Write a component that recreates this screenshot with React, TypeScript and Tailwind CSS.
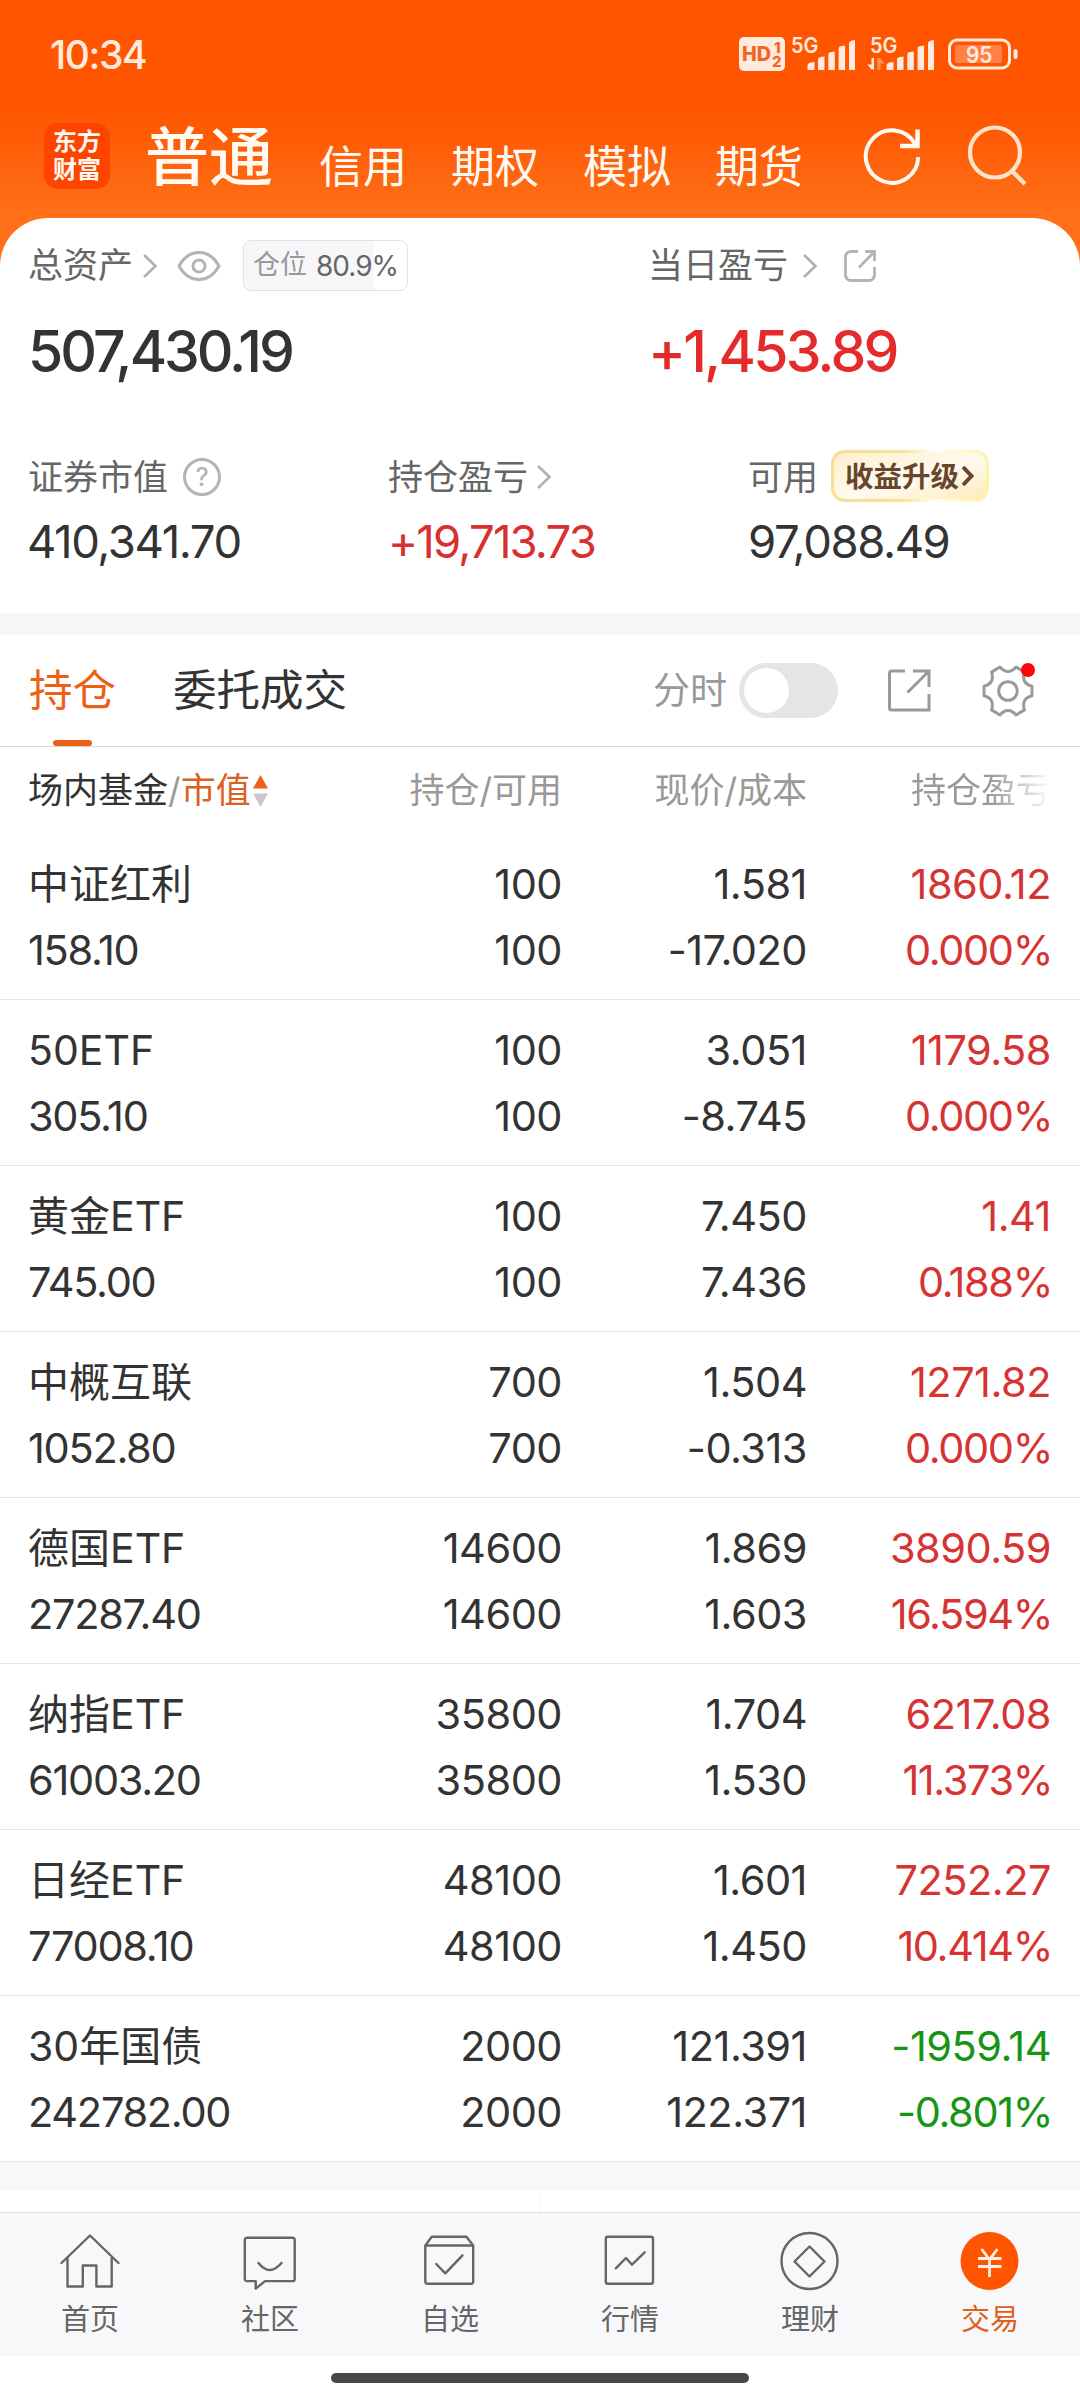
import { FC, ReactNode } from "react";
import clsx from "clsx";

interface Holding {
  name: string;
  value: string;
  amount: string;
  available: string;
  price: string;
  cost: string;
  profit: string;
  rate: string;
}

const holdings: Holding[] = [
  { name: "中证红利", value: "158.10", amount: "100", available: "100", price: "1.581", cost: "-17.020", profit: "1860.12", rate: "0.000%" },
  { name: "50ETF", value: "305.10", amount: "100", available: "100", price: "3.051", cost: "-8.745", profit: "1179.58", rate: "0.000%" },
  { name: "黄金ETF", value: "745.00", amount: "100", available: "100", price: "7.450", cost: "7.436", profit: "1.41", rate: "0.188%" },
  { name: "中概互联", value: "1052.80", amount: "700", available: "700", price: "1.504", cost: "-0.313", profit: "1271.82", rate: "0.000%" },
  { name: "德国ETF", value: "27287.40", amount: "14600", available: "14600", price: "1.869", cost: "1.603", profit: "3890.59", rate: "16.594%" },
  { name: "纳指ETF", value: "61003.20", amount: "35800", available: "35800", price: "1.704", cost: "1.530", profit: "6217.08", rate: "11.373%" },
  { name: "日经ETF", value: "77008.10", amount: "48100", available: "48100", price: "1.601", cost: "1.450", profit: "7252.27", rate: "10.414%" },
  { name: "30年国债", value: "242782.00", amount: "2000", available: "2000", price: "121.391", cost: "122.371", profit: "-1959.14", rate: "-0.801%" },
];

const Chevron: FC<{ className?: string }> = ({ className }) => (
  <svg viewBox="0 0 16 26" className={clsx("w-4 h-[26px] shrink-0", className)} fill="none" stroke="#b0b0b0" strokeWidth="2.6">
    <path d="M2 2l11.5 11L2 24" />
  </svg>
);

const Signal: FC<{ arrows?: boolean }> = ({ arrows }) => (
  <svg viewBox="-4 -6 70 48" className="w-[70px] h-12 shrink-0" fill="#ffeadd">
    <text x="0" y="16.5" fontSize="21.5" fontWeight="600" textLength="27.5" lengthAdjust="spacingAndGlyphs">
      5G
    </text>
    {arrows && (
      <>
        <path d="M4 22v11.500h-2.500L-2.500 28.500h4V22z" />
        <path d="M7.500 34V22H10l4.500 5.500H10.500V34z" opacity=".4" />
      </>
    )}
    <path d="M16.500 34v-4q0-3 3-3.500l4-.5v8zM27 34V24q0-3 3-3l3.500-.5V34zM37.300 34V19q0-3 3-3l3.500-.5V34zM47.600 34V13q0-3 3-3l3.500-.5V34zM58 34V8q0-3 3-3.500l3-.5v30z" />
  </svg>
);

const StatusBar = () => (
  <div className="flex items-center justify-between h-[108px] pl-[50px] pr-[62px] text-[#ffeadd]">
    <span className="text-[39px] leading-none font-medium tracking-[-1.4px]">10:34</span>
    <div className="flex items-center">
      <svg viewBox="0 0 46 34" className="w-[46px] h-[34px] mr-0.5">
        <rect width="46" height="34" rx="5" fill="#ffeadd" />
        <g fill="#f0661f" fontWeight="800">
          <text x="3" y="24" fontSize="20" textLength="29" lengthAdjust="spacingAndGlyphs">HD</text>
          <text x="35" y="15.5" fontSize="15">1</text>
          <text x="33" y="30" fontSize="15">2</text>
        </g>
      </svg>
      <Signal />
      <div className="w-[9px]" />
      <Signal arrows />
      <svg viewBox="0 0 70 32" className="w-[70px] h-8 ml-[12px]" fill="none">
        <rect x="1.500" y="2" width="60" height="28" rx="7.500" stroke="#ffeadd" strokeWidth="3" />
        <rect x="7" y="7" width="47" height="18" rx="2" fill="#ff8145" />
        <rect x="65.500" y="11" width="4" height="10" rx="2" fill="#ffeadd" />
        <text x="18" y="24.500" fontSize="23.500" fontWeight="600" fill="#ffeadd" textLength="26.500" lengthAdjust="spacingAndGlyphs">95</text>
      </svg>
    </div>
  </div>
);

const AppHeader = () => (
  <header className="flex h-[110px] pl-11 text-[#fffaf2]">
    <div className="mt-[15px] w-[66px] h-[66px] rounded-[14px] bg-[#ff4400] flex flex-col items-center justify-center font-bold text-[24px] leading-[28px]">
      <span>东方</span>
      <span>财富</span>
    </div>
    <h1 className="mt-[17px] ml-[35px] w-[128px] text-[64px] leading-[64px] font-medium">普通</h1>
    <nav className="mt-[37px] ml-[46px] flex gap-11 text-[44px] leading-[44px]">
      <span>信用</span>
      <span>期权</span>
      <span>模拟</span>
      <span>期货</span>
    </nav>
    <svg viewBox="0 0 60 60" className="mt-[18px] ml-[59px] w-[60px] h-[60px]" fill="none" stroke="#fffaf2" strokeWidth="4">
      <path d="M56.200 31A26.200 26.200 0 1 1 53 18" />
      <path d="M55.500 3.500v16.500H38" strokeWidth="4.500" />
    </svg>
    <svg viewBox="0 0 62 62" className="mt-4 ml-11 w-[62px] h-[62px]" fill="none" stroke="#ffe4cc" strokeWidth="4.200">
      <circle cx="29" cy="28.500" r="25" />
      <path d="M46 47l13 13" />
    </svg>
  </header>
);

const Summary = () => (
  <section className="h-[395px] bg-white rounded-t-[48px] text-[35px] text-[#666]">
    <div className="flex h-[94px] pt-px">
      <div className="flex items-center w-[648px] pl-7">
        <span className="leading-none">总资产</span>
        <Chevron className="ml-[9px]" />
        <svg viewBox="0 0 44 32" className="w-11 h-8 ml-[19px]" fill="none" stroke="#b4b4b4" strokeWidth="3">
          <path d="M2 16C12-2 32-2 42 16 32 34 12 34 2 16z" />
          <circle cx="22" cy="16" r="6" />
        </svg>
        <div className="ml-[22px] flex items-center justify-center w-[165px] h-[51px] border border-[#e2e2e6] rounded-lg bg-linear-to-r from-[#f7f7fa] from-80% to-white to-80% text-[28px]">
          <span className="text-[27px] text-[#999]">仓位</span>
          <span className="ml-[9px] tracking-[-1px]">80.9%</span>
        </div>
      </div>
      <div className="flex items-center">
        <span className="leading-none">当日盈亏</span>
        <Chevron className="ml-[14px]" />
        <svg viewBox="0 0 34 34" className="w-[34px] h-[34px] ml-[25px]" fill="none" stroke="#b4b4b4" strokeWidth="2.800">
          <path d="M15 2.500H8A5.500 5.500 0 0 0 2.500 8v18A5.500 5.500 0 0 0 8 31.500h18a5.500 5.500 0 0 0 5.500-5.500v-8M22 2.500h9.500V12M31 3L16 18.500" />
        </svg>
      </div>
    </div>
    <div className="flex h-[76px] pt-[3px] items-center text-[57px] font-medium">
      <span className="w-[648px] pl-7 text-[#333] tracking-[-3px]">507,430.19</span>
      <span className="text-[#e42a2a] tracking-[-2.800px]">+1,453.89</span>
    </div>
    <div className="mt-[53px] flex h-[72px]">
      <div className="flex items-center w-[388px] pl-7">
        <span className="leading-none">证券市值</span>
        <span className="ml-[15px] w-[38px] h-[38px] rounded-full border-3 border-[#b4b4b4] flex items-center justify-center text-[25px] leading-none font-medium text-[#b4b4b4]">
          ?
        </span>
      </div>
      <div className="flex items-center w-[360px]">
        <span className="leading-none">持仓盈亏</span>
        <Chevron className="ml-[8px]" />
      </div>
      <div className="flex items-center">
        <span className="leading-none">可用</span>
        <div className="-mt-0.5 ml-[13px] w-[158px] h-[52px] p-[3px] rounded-[14px] bg-linear-to-r from-[#f7e093] from-45% via-[#fffdf0] via-65% to-[#fff3a2]">
          <div className="flex items-center h-full pl-[11px] rounded-[11px] bg-linear-to-br from-[#ffefcc] via-[#fffaf0] via-55% to-[#ffeab8] text-[28.500px] font-bold text-[#68452d]">
            <span className="mt-0.5 leading-none">收益升级</span>
            <svg viewBox="0 0 14 22" className="w-[14px] h-[22px] ml-0.5 shrink-0" fill="none" stroke="#68452d" strokeWidth="4">
              <path d="M2 2l8.500 9L2 20" />
            </svg>
          </div>
        </div>
      </div>
    </div>
    <div className="flex h-[58px] items-center text-[45.500px] text-[#333]">
      <span className="w-[388px] pl-[27px] tracking-[-1.4px]">410,341.70</span>
      <span className="w-[360px] text-[#d83030] tracking-[-1.8px]">+19,713.73</span>
      <span className="tracking-[-1.400px]">97,088.49</span>
    </div>
  </section>
);

const TabBar = () => (
  <div className="flex h-[112px] border-b border-[#d8d8d8] pl-[29px]">
    <div className="relative flex items-center w-[88px] text-[43.500px] text-[#ee5f16]">
      持仓
      <i className="absolute left-6 bottom-0 w-[39px] h-[6px] rounded-full bg-[#ee5f16]" />
    </div>
    <div className="flex items-center ml-[56px] w-[480px] text-[43.500px] text-[#333]">委托成交</div>
    <div className="flex items-center text-[37px] text-[#999]">
      <span>分时</span>
      <div className="ml-3 w-[99px] h-[55px] rounded-full bg-[#e5e5e7] p-[5px]">
        <div className="w-[45px] h-[45px] rounded-full bg-white" />
      </div>
      <svg viewBox="0 0 46 46" className="w-[46px] h-[46px] ml-[48px]" fill="none" stroke="#999" strokeWidth="3">
        <path d="M19 3H5.500A2 2 0 0 0 3.500 5v35a2 2 0 0 0 2 2H43V26M27 3h16v16M43 3L21.500 24.500" />
      </svg>
      <div className="relative ml-[49px]">
        <svg viewBox="-27 -27 54 54" className="w-[54px] h-[54px]" fill="none" stroke="#999" strokeWidth="3" strokeLinejoin="round">
          <path d="M24 4.800Q13 7.500 16.400 18.900L8.100 24Q0 15-8.100 24L-16.400 18.900Q-13 7.500-24 4.800V-4.800Q-13-7.500-16.400-18.900L-8.100-24Q0-15 8.100-24L16.400-18.900Q13-7.500 24-4.800z" />
          <circle r="9.300" />
        </svg>
        <i className="absolute -top-px right-0 w-[14px] h-[14px] rounded-full bg-[#ff0505]" />
      </div>
    </div>
  </div>
);

const TableHead = () => (
  <div className="grid grid-cols-[271px_263px_245px_244px] h-[87px] items-center pl-7 text-[35px] text-[#999] text-right">
    <div className="flex items-center">
      <span className="text-[#333]">场内基金</span>
      <span>/</span>
      <span className="text-[#dc6020]">市值</span>
      <svg viewBox="0 0 16 32" className="w-4 h-8 ml-0.5 shrink-0">
        <path d="M0 13.500L7.500 0 15 13.500z" fill="#f0621a" />
        <path d="M0 18.500h15L7.500 32z" fill="#c8c8c8" />
      </svg>
    </div>
    <span>持仓/可用</span>
    <span>现价/成本</span>
    <span className="bg-linear-to-r from-[#999] from-75% to-[#ffffff] to-100% bg-clip-text text-transparent">持仓盈亏</span>
  </div>
);

const HoldingRow: FC<{ item: Holding }> = ({ item }) => (
  <div className="grid grid-cols-[271px_263px_245px_244px] grid-rows-[66px_67px] h-[166px] pt-[17px] pl-7 border-b border-[#e8e8e8] text-[41.500px] leading-[67px] text-[#333] text-right tracking-[-0.500px]">
    <span className="text-left text-[41px] tracking-normal">{item.name}</span>
    <span>{item.amount}</span>
    <span>{item.price}</span>
    <span className={item.profit.startsWith("-") ? "text-[#149614]" : "text-[#d63333]"}>{item.profit}</span>
    <span className="text-left tracking-[-1.3px]">{item.value}</span>
    <span>{item.available}</span>
    <span>{item.cost}</span>
    <span className={clsx("-mr-px tracking-[-1.4px]", item.rate.startsWith("-") ? "text-[#149614]" : "text-[#d63333]")}>
      {item.rate}
    </span>
  </div>
);

const NavItem: FC<{ label: string; active?: boolean; children: ReactNode }> = ({ label, active, children }) => (
  <div className={clsx("flex flex-col items-center pt-[18px]", active ? "text-[#dc6020]" : "text-[#666]")}>
    <svg viewBox="0 0 60 60" className="w-[60px] h-[60px]" fill="none" stroke="#666" strokeWidth="2.400" strokeLinejoin="round" strokeLinecap="round">
      {children}
    </svg>
    <span className="mt-[14px] text-[29px] leading-[30px]">{label}</span>
  </div>
);

const BottomNav = () => (
  <nav className="grid grid-cols-6 h-[144px] border-t border-[#e0e0e0] bg-[#f8f8fa]">
    <NavItem label="首页">
      <path d="M1.500 32L30 4.500 58.500 32M7.500 27v28.500h15.300v-21h13.600v21h15.300V27" />
    </NavItem>
    <NavItem label="社区">
      <path d="M7 6.700h45.500a2.200 2.200 0 0 1 2.200 2.200v39a2.200 2.200 0 0 1-2.200 2.200H25l-9.300 7.500v-7.500H7a2.200 2.200 0 0 1-2.200-2.200v-39A2.200 2.200 0 0 1 7 6.700zM18.500 32q11 14 23 0" />
    </NavItem>
    <NavItem label="自选">
      <path d="M5.300 14.500l6.500-8.800h34.600l6.800 8.800v36a2.200 2.200 0 0 1-2.200 2.200H7.500a2.200 2.200 0 0 1-2.200-2.200zh47.900M16.300 33l9 9.300 17.200-18" />
    </NavItem>
    <NavItem label="行情">
      <rect x="5.800" y="5.700" width="47.200" height="47" rx="2" />
      <path d="M15.800 37.300L26 27l6 6.700 12.700-12.400" />
    </NavItem>
    <NavItem label="理财">
      <circle cx="29.500" cy="30" r="28" />
      <path d="M29.500 15.500L44.500 30.500l-15 15-15-15z" />
    </NavItem>
    <NavItem label="交易" active>
      <circle cx="29.500" cy="30" r="29" fill="#ff5500" stroke="none" />
      <path d="M21.500 18l8 10.500 8-10.500M18 27.500h23.500M18 35.500h23.500M29.500 28v18" stroke="#fff0e4" strokeLinecap="butt" strokeWidth="2.800" />
    </NavItem>
  </nav>
);

const App = () => (
  <div className="w-[1080px] h-[2400px] overflow-hidden bg-white font-['Inter','Noto_Sans_CJK_SC',sans-serif]">
    <div className="bg-[linear-gradient(180deg,#ff5500_110px,#ff7019_218px)]">
      <StatusBar />
      <AppHeader />
      <Summary />
    </div>
    <div className="h-[22px] bg-[#f7f7fa]" />
    <TabBar />
    <TableHead />
    {holdings.map((item) => (
      <HoldingRow key={item.name} item={item} />
    ))}
    <div className="h-[28px] bg-[#f7f8fa]" />
    <div className="h-[22px]">
      <div className="w-[540px] h-full border-r border-[#f5f5f5]" />
    </div>
    <BottomNav />
    <div className="flex justify-center pt-[17px]">
      <div className="w-[418px] h-[10px] rounded-full bg-[#474747]" />
    </div>
  </div>
);

export default App;
